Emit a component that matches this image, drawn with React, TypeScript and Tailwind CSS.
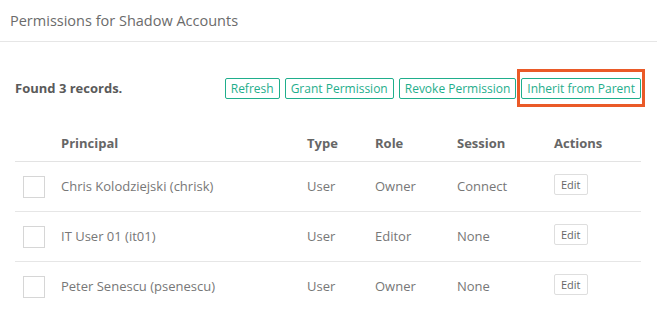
import React from "react";

const rows = [
  { name: "Chris Kolodziejski (chrisk)", type: "User", role: "Owner", session: "Connect" },
  { name: "IT User 01 (it01)", type: "User", role: "Editor", session: "None" },
  { name: "Peter Senescu (psenescu)", type: "User", role: "Owner", session: "None" },
];

const cols = "grid grid-cols-[46px_246px_68px_82px_97px_1fr] items-center";

const ActionButton: React.FC<{ label: string }> = ({ label }) => (
  <button className="h-[21px] px-[5px] border border-[#1fae8c] rounded-[2px] text-[12px] leading-none text-[#1fae8c] bg-white">
    {label}
  </button>
);

const App: React.FC = () => {
  return (
    <div className="w-[657px] h-[328px] bg-white font-['Open_Sans',sans-serif] overflow-hidden">
      <div className="h-[42px] flex items-center px-[10px] border-b border-[#e6e6e6]">
        <h1 className="text-[14.5px] text-[#6b6b6b]">Permissions for Shadow Accounts</h1>
      </div>

      <div className="pl-[15px] pr-[16px]">
        <div className="flex items-center justify-between h-[35px] mt-[29px]">
          <span className="text-[13px] font-bold text-[#5a5a5a]">Found 3 records.</span>
          <div className="flex items-center gap-[5px]">
            <ActionButton label="Refresh" />
            <ActionButton label="Grant Permission" />
            <ActionButton label="Revoke Permission" />
            <div className="relative flex">
              <ActionButton label="Inherit from Parent" />
              <div className="absolute -left-[4px] -right-[4px] -top-[9px] -bottom-[8px] border-[3px] border-[#ea5a28] pointer-events-none" />
            </div>
          </div>
        </div>

        <div className="mt-[18px]">
          <div className={`${cols} h-[38px] border-b border-[#e3e3e3] text-[13px] font-bold text-[#666]`}>
            <span />
            <span className="translate-y-[1px]">Principal</span>
            <span className="translate-y-[1px]">Type</span>
            <span className="translate-y-[1px]">Role</span>
            <span className="translate-y-[1px]">Session</span>
            <span className="translate-y-[1px]">Actions</span>
          </div>
          {rows.map((r, i) => (
            <div
              key={r.name}
              className={`${cols} h-[50px] text-[13px] text-[#777] ${i < rows.length - 1 ? "border-b border-[#e6e6e6]" : ""}`}
            >
              <span className="ml-[8px] w-[22px] h-[22px] border border-[#d6d6d6] bg-white" />
              <span>{r.name}</span>
              <span>{r.type}</span>
              <span>{r.role}</span>
              <span>{r.session}</span>
              <span className="-mt-[5px]">
                <button className="h-[21px] px-[6px] border border-[#dedede] rounded-[2px] text-[11px] leading-none text-[#666] bg-white">
                  Edit
                </button>
              </span>
            </div>
          ))}
        </div>
      </div>
    </div>
  );
};

export default App;
